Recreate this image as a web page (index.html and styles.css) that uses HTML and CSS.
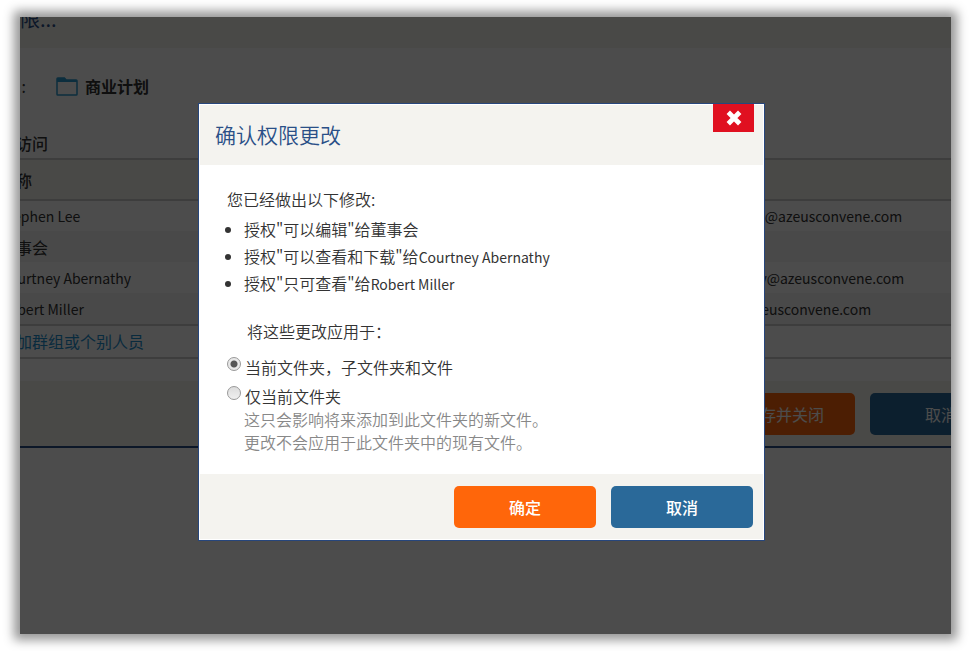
FILE: index.html
```html
<!DOCTYPE html>
<html lang="zh-CN">

<head>
  <meta charset="UTF-8">
  <meta name="viewport" content="width=device-width, initial-scale=1.0">
  <title>确认权限更改</title>
  <link rel="stylesheet" href="styles.css">
</head>

<body>
  <div class="stage">
    <!-- 权限面板 -->
    <div class="panel">
      <div class="panel_header">权限...</div>
      <div class="panel_body">
        <div class="folder_row">
          <span class="folder_label">文件夹 :</span>
          <svg class="folder_icon" viewBox="0 0 22 19" aria-hidden="true">
            <path d="M1 1.8 Q1 1 1.8 1 H8.4 L10.2 3 H20.2 Q21 3 21 3.8 V17.2 Q21 18 20.2 18 H1.8 Q1 18 1 17.2 Z" fill="none" stroke="#2a9bd0" stroke-width="1.5" />
            <path d="M1 1 H8.4 L10.2 3 H21 V5 H1 Z" fill="#2a9bd0" />
          </svg>
          <span class="folder_name">商业计划</span>
        </div>
        <h2 class="access_title">可访问</h2>
        <table class="access">
          <thead>
            <tr>
              <th class="col_name">名称</th>
              <th></th>
            </tr>
          </thead>
          <tbody>
            <tr>
              <td class="latin">Stephen Lee</td>
              <td class="latin email">stephenlee@azeusconvene.com</td>
            </tr>
            <tr>
              <td>董事会</td>
              <td></td>
            </tr>
            <tr>
              <td class="latin">Courtney Abernathy</td>
              <td class="latin email">cabernathy@azeusconvene.com</td>
            </tr>
            <tr>
              <td class="latin">Robert Miller</td>
              <td class="latin email">robert@azeusconvene.com</td>
            </tr>
          </tbody>
        </table>
        <div class="add_row"><a href="#">添加群组或个别人员</a></div>
      </div>
      <div class="panel_footer">
        <button class="btn btn_ok" type="button">保存并关闭</button>
        <button class="btn btn_cancel" type="button">取消</button>
      </div>
    </div>

    <!-- 确认对话框 -->
    <div class="overlay">
      <form class="dialog" role="dialog" aria-labelledby="dialog_title">
        <div class="dialog_header">
          <h1 id="dialog_title">确认权限更改</h1>
          <button class="close" type="button" aria-label="关闭">
            <svg viewBox="0 0 14 14" aria-hidden="true">
              <path d="M2 2 L12 12 M12 2 L2 12" stroke="#fff" stroke-width="4.2" />
            </svg>
          </button>
        </div>
        <div class="dialog_body">
          <p class="intro">您已经做出以下修改:</p>
          <ul class="changes">
            <li>授权"可以编辑"给董事会</li>
            <li>授权"可以查看和下载"给<span class="latin">Courtney Abernathy</span></li>
            <li>授权"只可查看"给<span class="latin">Robert Miller</span></li>
          </ul>
          <fieldset class="scope">
            <legend>将这些更改应用于：</legend>
            <div class="option">
              <input type="radio" name="scope" id="scope_all" checked>
              <label for="scope_all">当前文件夹，子文件夹和文件</label>
            </div>
            <div class="option">
              <input type="radio" name="scope" id="scope_current">
              <label for="scope_current">仅当前文件夹</label>
            </div>
            <p class="hint">这只会影响将来添加到此文件夹的新文件。<br>更改不会应用于此文件夹中的现有文件。</p>
          </fieldset>
        </div>
        <div class="dialog_footer">
          <button class="btn btn_ok" type="submit">确定</button>
          <button class="btn btn_cancel" type="button">取消</button>
        </div>
      </form>
    </div>
  </div>
</body>

</html>
```
FILE: styles.css
```css
/* 基本样式 */
* {
  box-sizing: border-box;
}

body {
  margin: 0;
  padding: 17px 20px;
  min-height: 100vh;
  display: flex;
  background-color: #fff;
  color: #333;
  font-family: "Noto Sans CJK SC", "Open Sans", sans-serif;
  font-size: 16px;
  line-height: 24px;
  overflow: hidden;
}

h1,
h2,
p,
ul {
  margin: 0;
  padding: 0;
}

.latin {
  font-size: 14px;
  font-weight: 400;
  line-height: 20px;
}

.stage {
  position: relative;
  flex: 1;
  min-width: 0;
  overflow: hidden;
  background-color: #fff;
}

/* 外框阴影 */
body::before {
  content: "";
  position: absolute;
  inset: 17px 20px;
  box-shadow: 0 0 10px 6px #969696;
}

/* 权限面板 */
.panel {
  margin: 0 -71px 0 -20px;
  border-bottom: 2px solid #2a4f87;
}

.panel_header {
  height: 31px;
  background-color: #f4f3ef;
  color: #2a4f87;
  font-size: 20px;
  line-height: 4px;
}

.panel_body {
  padding: 26px 0 22px;
}

.folder_row {
  display: flex;
  align-items: center;
}

.folder_label {
  display: flex;
  justify-content: flex-end;
  width: 26px;
  margin-right: 30px;
  white-space: nowrap;
}

.folder_icon {
  width: 22px;
  height: 19px;
  margin-right: 7px;
}

.folder_name {
  font-weight: bold;
}

.access_title {
  padding: 33px 0 3px;
  font-size: 16px;
  font-weight: 500;
}

.access {
  width: 100%;
  border-collapse: collapse;
  table-layout: fixed;
  text-align: left;
}

.access th {
  height: 41px;
  padding: 0;
  background-color: #f4f3ef;
  border-top: 2px solid #ccc;
  border-bottom: 2px solid #ccc;
  font-weight: 500;
}

.access .col_name {
  width: 67%;
}

.access td {
  height: 31px;
  padding: 0;
}

.access .email {
  padding-left: 8px;
}

.access tbody tr:nth-child(even) {
  background-color: #f5f5f5;
}

.add_row {
  padding: 3px 0 4px;
  border-top: 2px solid #ccc;
  border-bottom: 2px solid #ccc;
}

.add_row a {
  color: #1f8fd0;
  text-decoration: none;
}

.panel_footer,
.dialog_footer {
  display: flex;
  justify-content: flex-end;
  gap: 15px;
  padding: 12px 10px 11px;
  background-color: #f4f3ef;
}

.btn {
  width: 142px;
  height: 42px;
  padding: 0;
  border: 0;
  border-radius: 5px;
  color: #fff;
  font-family: inherit;
  font-size: 16px;
  cursor: pointer;
}

.btn_ok {
  background-color: #ff660a;
}

.btn_cancel {
  background-color: #2a6999;
}

.dialog .btn {
  font-weight: 500;
}

/* 遮罩和对话框 */
.overlay {
  position: absolute;
  inset: 0;
  display: flex;
  justify-content: center;
  align-items: center;
  padding: 0 8px 8px 0;
  background-color: rgba(0, 0, 0, 0.7);
}

.dialog {
  position: relative;
  width: 100%;
  max-width: 567px;
  padding: 1px;
  border: 1px solid #27467c;
  background-color: #fff;
}

.dialog_header {
  padding: 13px 15px 15px;
  background-color: #f4f3ef;
}

.dialog_header h1 {
  color: #2a4f87;
  font-size: 21px;
  font-weight: 350;
  line-height: 32px;
}

.close {
  position: absolute;
  top: 0;
  right: 10px;
  width: 41px;
  height: 28px;
  padding: 0;
  border: 0;
  background-color: #e01020;
  cursor: pointer;
}

.close svg {
  display: block;
  width: 16px;
  height: 16px;
  margin: 0 auto;
}

.dialog_body {
  padding: 22px 27px 20px;
  font-weight: 350;
}

.changes {
  padding: 5px 0 0 17px;
  line-height: 27px;
}

.scope {
  min-width: 0;
  margin: 22px 0 0;
  padding: 12px 0 0;
  border: 0;
}

.scope legend {
  padding: 0 0 0 20px;
}

.option {
  display: flex;
  align-items: flex-start;
  gap: 4px;
  padding-bottom: 5px;
}

.option input {
  appearance: none;
  width: 14px;
  height: 14px;
  margin: 2px 0 0;
  border: 1px solid #999;
  border-radius: 50%;
  background: linear-gradient(#dcdcdc, #f0f0f0);
}

.option input:checked {
  background: radial-gradient(circle, #555 3px, #e8e8e8 4px);
}

.hint {
  margin-top: -5px;
  padding-left: 17px;
  color: #888;
  line-height: 23px;
}
```
